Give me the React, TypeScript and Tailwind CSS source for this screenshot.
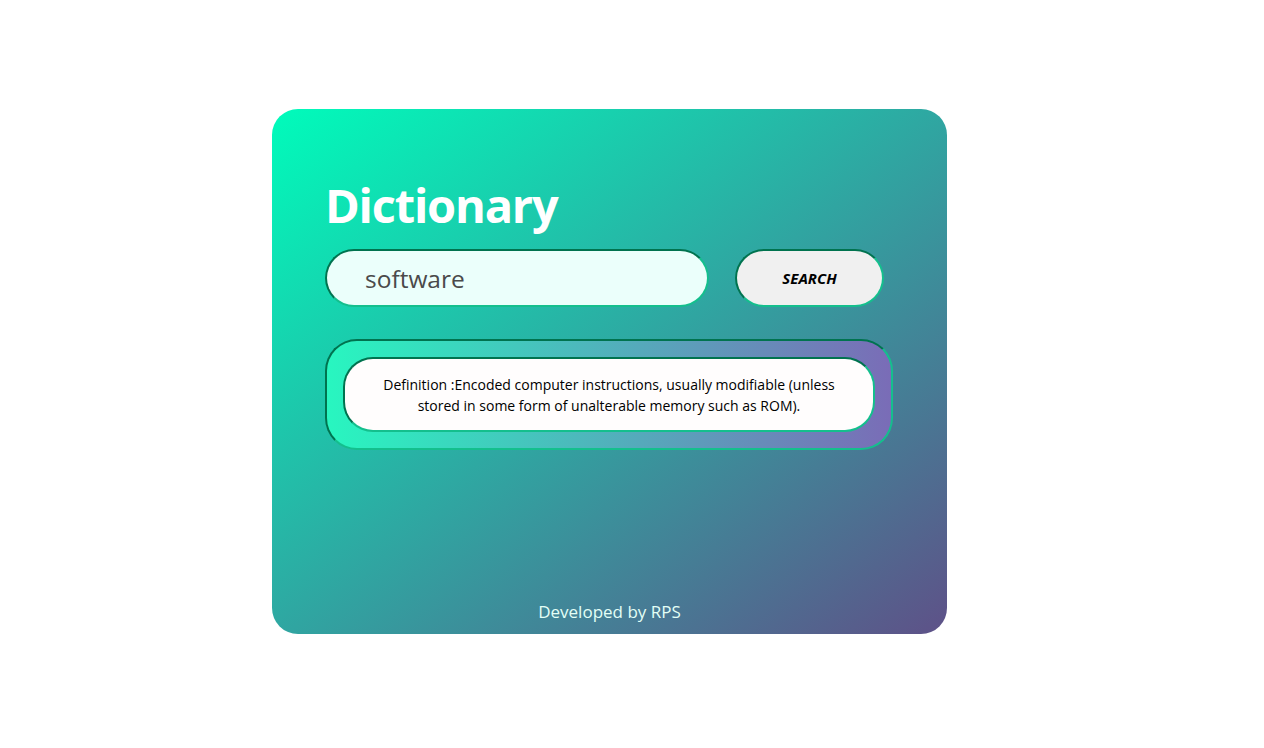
import { useState } from 'react';

const App = () => {
  const [word, setWord] = useState('software');

  return (
    <div className="min-h-screen bg-white pt-[109px] pl-[272px] font-['Open_Sans','Noto_Sans',sans-serif]">
      <div className="w-[675px] h-[525px] rounded-[26px] bg-[linear-gradient(to_bottom_right,#00fcbb,#5e5188)] flex flex-col px-[53px] pt-[72px] pb-[10px]">
        <h1 className="text-[47px] leading-[48px] font-bold text-white tracking-[-1.2px]">Dictionary</h1>

        <div className="flex items-center gap-[26px] mt-[20px]">
          <input
            type="text"
            value={word}
            onChange={(e) => setWord(e.target.value)}
            className="w-[384px] h-[58px] rounded-full bg-[#ebfffb] border-2 border-t-[#00734f] border-l-[#00734f] border-b-[#14bf8d] border-r-[#14bf8d] pl-[38px] text-[24.5px] text-[#4a4a4a] outline-none"
          />
          <button className="w-[149px] h-[58px] rounded-full bg-[#f0f0f0] border-2 border-t-[#00734f] border-l-[#00734f] border-b-[#14bf8d] border-r-[#14bf8d] text-[15px] font-bold italic text-black">
            SEARCH
          </button>
        </div>

        <div className="mt-[32px] w-[568px] h-[111px] rounded-[32px] bg-[linear-gradient(to_right,#28f6c0,#7a6cb7)] border-2 border-t-[#00734f] border-l-[#00734f] border-b-[#14bf8d] border-r-[#14bf8d] p-[16px]">
          <div className="h-[75px] rounded-[30px] bg-[#fffdfd] border-2 border-t-[#00734f] border-l-[#00734f] border-b-[#14bf8d] border-r-[#14bf8d] flex items-center justify-center px-[28px]">
            <p className="text-[14px] leading-[21px] text-black text-center">
              Definition :Encoded computer instructions, usually modifiable (unless stored in some form of unalterable memory such as ROM).
            </p>
          </div>
        </div>

        <div className="mt-auto text-center text-[17px] text-[#e3fff6]">Developed by RPS</div>
      </div>
    </div>
  );
};

export default App;
